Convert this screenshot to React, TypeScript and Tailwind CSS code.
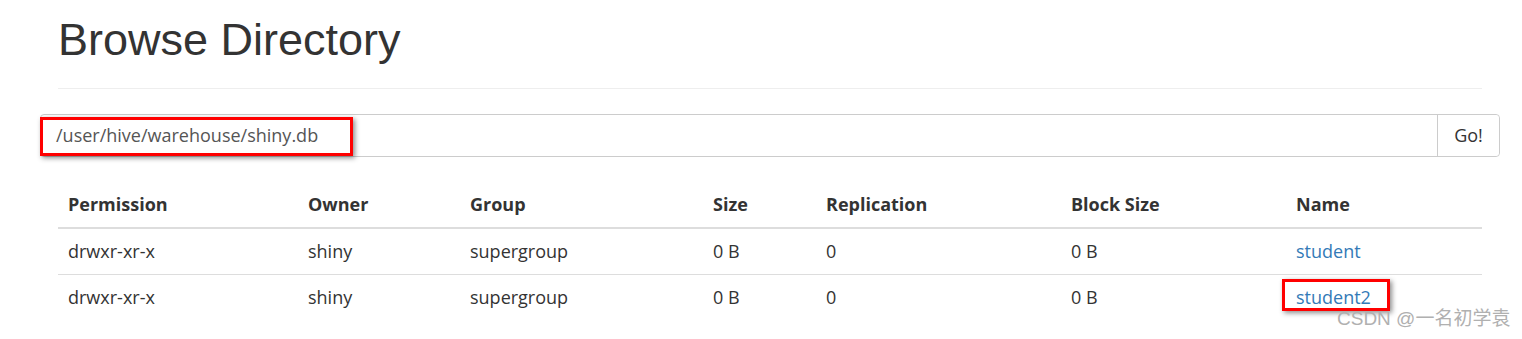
import React from "react";

const cols = [
  { title: "Permission", w: "w-[240px]" },
  { title: "Owner", w: "w-[162px]" },
  { title: "Group", w: "w-[243px]" },
  { title: "Size", w: "w-[113px]" },
  { title: "Replication", w: "w-[245px]" },
  { title: "Block Size", w: "w-[225px]" },
  { title: "Name", w: "w-[196px]" },
];

const rows = [
  ["drwxr-xr-x", "shiny", "supergroup", "0 B", "0", "0 B", "student"],
  ["drwxr-xr-x", "shiny", "supergroup", "0 B", "0", "0 B", "student2"],
];

export default function App() {
  return (
    <div className="relative w-[1522px] h-[339px] bg-white overflow-hidden text-[#333] font-['Open_Sans',sans-serif]">
      <div className="w-[1424px] ml-[58px]">
        {/* header */}
        <h1 className="pt-[15px] text-[45px] leading-[50px] font-['Liberation_Sans',Arial,sans-serif] text-[#333]">
          Browse Directory
        </h1>
        <div className="mt-[23px] border-t border-[#eee]" />

        {/* path input */}
        <div className="relative mt-[25px] -mx-[18px] flex h-[43px] border border-[#ccc] rounded-[4px]">
          <div className="flex-1 flex items-center pl-[15px] text-[18px] text-[#555]">
            /user/hive/warehouse/shiny.db
          </div>
          <button className="w-[62px] border-l border-[#ccc] text-[18px] text-[#333] bg-white rounded-r-[4px]">
            Go!
          </button>
          <div className="absolute left-[-1px] top-[2px] w-[313px] h-[39px] border-[3px] border-[#f00] shadow-[2px_2px_5px_rgba(0,0,0,0.45)]" />
        </div>

        {/* listing */}
        <div className="mt-[24px] text-[18px]">
          <div className="flex border-b-2 border-[#ddd]">
            {cols.map((c) => (
              <div key={c.title} className={`${c.w} px-[10px] py-[10px] leading-[26px] font-bold`}>
                {c.title}
              </div>
            ))}
          </div>
          {rows.map((r, i) => (
            <div key={i} className={`flex ${i === 0 ? "border-b border-[#ddd]" : ""}`}>
              {r.map((v, j) => (
                <div key={j} className={`${cols[j].w} px-[10px] py-[10px] leading-[25px]`}>
                  {j === 6 ? (
                    <span className="relative text-[#337ab7]">
                      {v}
                      {v === "student2" && (
                        <span className="absolute left-[-14px] top-[-6px] w-[108px] h-[32px] border-[3px] border-[#f00] shadow-[2px_2px_5px_rgba(0,0,0,0.45)]" />
                      )}
                    </span>
                  ) : (
                    v
                  )}
                </div>
              ))}
            </div>
          ))}
        </div>
      </div>

      {/* watermark */}
      <div className="absolute left-[1337px] top-[307px] text-[19px] leading-[24px] text-[#b0b0b0] font-['Liberation_Sans','Noto_Sans_CJK_SC',sans-serif]">
        CSDN @一名初学袁
      </div>
    </div>
  );
}
